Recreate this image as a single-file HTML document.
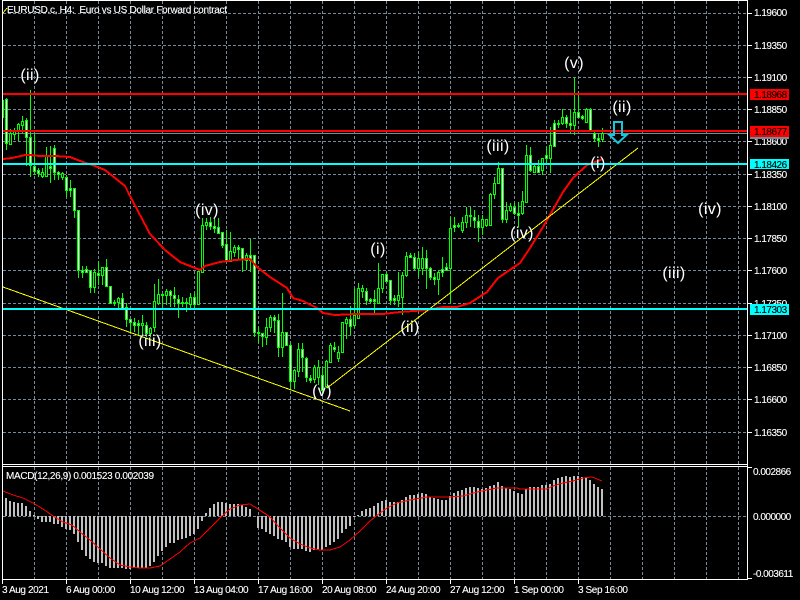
<!DOCTYPE html>
<html><head><meta charset="utf-8"><title>EURUSD.c H4</title>
<style>
html,body{margin:0;padding:0;background:#000;width:800px;height:600px;overflow:hidden}
svg{display:block;position:absolute;left:0;top:0}
text{font-family:"Liberation Sans",sans-serif;fill:#fff;font-size:10px;white-space:pre;stroke:#fff;stroke-width:.12px}
.p{font-size:10px;letter-spacing:-.5px}
.t{letter-spacing:-.4px}
.w{font-size:16px;text-anchor:middle;letter-spacing:.4px;stroke-width:0}
.k{fill:#000;stroke:#000}
</style></head><body>
<svg width="800" height="600" viewBox="0 0 800 600" xmlns="http://www.w3.org/2000/svg">
<!-- grid -->
<g shape-rendering="crispEdges" stroke="#778899" stroke-width="1" stroke-dasharray="3 2" fill="none">
<path d="M34.5 1V464M66.5 1V464M98.5 1V464M130.5 1V464M162.5 1V464M194.5 1V464M226.5 1V464M258.5 1V464M290.5 1V464M322.5 1V464M354.5 1V464M386.5 1V464M418.5 1V464M450.5 1V464M482.5 1V464M514.5 1V464M546.5 1V464M578.5 1V464M610.5 1V464M642.5 1V464M674.5 1V464M706.5 1V464M738.5 1V464"/>
<path d="M3 13.5H747M3 45.5H747M3 77.5H747M3 109.5H747M3 141.5H747M3 174.5H747M3 206.5H747M3 238.5H747M3 270.5H747M3 303.5H747M3 335.5H747M3 367.5H747M3 399.5H747M3 432.5H747"/>
<path d="M34.5 467V579M66.5 467V579M98.5 467V579M130.5 467V579M162.5 467V579M194.5 467V579M226.5 467V579M258.5 467V579M290.5 467V579M322.5 467V579M354.5 467V579M386.5 467V579M418.5 467V579M450.5 467V579M482.5 467V579M514.5 467V579M546.5 467V579M578.5 467V579M610.5 467V579M642.5 467V579M674.5 467V579M706.5 467V579M738.5 467V579"/>
<path d="M3 516.5H747"/>
</g>
<!-- bid line -->
<path d="M3 133.5H747" stroke="#778899" shape-rendering="crispEdges"/>
<!-- wicks -->
<path shape-rendering="crispEdges" stroke="#00ff00" fill="none" d="M3.5 100V118M6.5 98V150M10.5 129V145M14.5 128V140M18.5 123V141M22.5 116V133M26.5 118V166M30.5 90V177M34.5 133V175M38.5 168V177M42.5 168V178M46.5 147V177M50.5 146V183M54.5 145V180M58.5 171V180M62.5 172V180M66.5 175V197M70.5 180V197M74.5 188V218M78.5 210V278M82.5 266V278M86.5 266V273M90.5 270V293M94.5 269V293M98.5 261V285M102.5 267V285M106.5 259V287M110.5 286V304M114.5 300V306M118.5 297V308M122.5 293V308M126.5 303V327M130.5 319V332M134.5 318V332M138.5 320V335M142.5 315V335M146.5 322V337M150.5 327V337M154.5 284V332M158.5 279V305M162.5 294V307M166.5 289V305M170.5 290V307M174.5 287V307M178.5 295V318M182.5 297V307M186.5 298V312M190.5 293V308M194.5 293V309M198.5 271V305M202.5 218V272M206.5 218V230M210.5 217V230M214.5 218V233M218.5 218V233M222.5 232V248M226.5 230V261M230.5 232V261M234.5 245V257M238.5 245V260M242.5 248V272M246.5 253V270M250.5 239V272M254.5 255V337M258.5 327V343M262.5 333V347M266.5 318V345M270.5 315V332M274.5 315V333M278.5 314V357M282.5 293V357M286.5 332V346M290.5 343V390M294.5 369V389M298.5 343V377M302.5 343V372M306.5 357V382M310.5 375V383M314.5 365V383M318.5 360V385M322.5 367V395M326.5 360V388M330.5 343V363M334.5 342V352M338.5 346V362M342.5 322V353M346.5 317V339M350.5 306V335M354.5 288V328M358.5 283V318M362.5 285V298M366.5 288V305M370.5 298V303M374.5 290V313M378.5 263V303M382.5 274V293M386.5 272V282M390.5 280V305M394.5 295V305M398.5 272V307M402.5 272V315M406.5 252V277M410.5 253V258M414.5 253V270M418.5 252V277M422.5 247V275M426.5 250V289M430.5 267V280M434.5 273V285M438.5 270V295M442.5 257V277M446.5 263V270M450.5 217V303M454.5 217V232M458.5 223V228M462.5 217V233M466.5 207V228M470.5 207V227M474.5 210V228M478.5 215V242M482.5 215V235M486.5 219V227M490.5 193V225M494.5 177V199M498.5 162V183M502.5 168V223M506.5 202V223M510.5 203V212M514.5 203V215M518.5 202V227M522.5 191V215M526.5 145V202M530.5 147V172M534.5 163V173M538.5 160V172M542.5 158V175M546.5 147V163M550.5 127V173M554.5 120V147M558.5 120V128M562.5 109V125M566.5 115V128M570.5 110V133M574.5 78V135M578.5 95V118M582.5 115V120M586.5 108V122M590.5 108V130M594.5 130V142M598.5 133V147M602.5 128V142"/>
<!-- bodies -->
<path shape-rendering="crispEdges" stroke="#00ff00" stroke-width="3" fill="none" d="M6.5 99V144M10.5 133V145M14.5 131V135M18.5 124V131M22.5 121V126M26.5 120V138M30.5 137V166M34.5 166V172M38.5 170V174M42.5 172V177M46.5 156V177M50.5 166V169M54.5 148V173M58.5 172V175M62.5 173V178M66.5 177V191M70.5 188V191M74.5 188V211M78.5 210V271M82.5 270V273M86.5 269V273M90.5 270V288M94.5 272V288M98.5 273V276M102.5 267V276M106.5 267V287M110.5 286V304M114.5 302V304M118.5 298V303M122.5 298V309M126.5 307V320M130.5 319V323M134.5 322V326M138.5 323V326M142.5 323V326M146.5 325V334M150.5 328V334M154.5 301V328M158.5 294V304M162.5 294V296M166.5 291V296M170.5 291V296M174.5 295V299M178.5 299V304M182.5 302V304M186.5 302V304M190.5 297V305M194.5 297V305M198.5 271V305M202.5 225V273M206.5 222V226M210.5 222V227M214.5 226V229M218.5 227V234M222.5 232V246M226.5 244V262M230.5 251V262M234.5 247V253M238.5 247V250M242.5 248V260M246.5 255V261M250.5 255V261M254.5 255V333M258.5 332V334M262.5 333V337M266.5 327V338M270.5 317V328M274.5 317V321M278.5 320V348M282.5 332V348M286.5 332V346M290.5 345V382M294.5 370V382M298.5 349V372M302.5 349V358M306.5 358V378M310.5 378V381M314.5 367V380M318.5 367V378M322.5 375V391M326.5 361V387M330.5 345V363M334.5 347V350M338.5 352V359M342.5 322V353M346.5 319V324M350.5 319V327M354.5 315V326M358.5 288V319M362.5 288V292M366.5 291V301M370.5 299V302M374.5 299V302M378.5 288V304M382.5 274V289M386.5 274V282M390.5 280V301M394.5 298V301M398.5 295V301M402.5 275V298M406.5 256V276M410.5 255V258M414.5 257V269M418.5 258V269M422.5 258V269M426.5 258V269M430.5 268V278M434.5 277V280M438.5 272V280M442.5 269V273M446.5 267V271M450.5 228V269M454.5 225V228M458.5 225V227M462.5 222V231M466.5 215V223M470.5 215V217M474.5 217V221M478.5 221V228M482.5 219V228M486.5 219V226M490.5 194V226M494.5 183V195M498.5 168V184M502.5 168V220M506.5 210V220M510.5 206V211M514.5 207V214M518.5 213V216M522.5 201V214M526.5 155V203M530.5 155V171M534.5 166V173M538.5 166V173M542.5 158V171M546.5 155V159M550.5 145V159M554.5 123V147M558.5 123V125M562.5 117V124M566.5 117V124M570.5 123V126M574.5 112V126M578.5 112V118M582.5 116V119M586.5 109V123M590.5 109V131M594.5 133V139M598.5 138V141M602.5 133V140"/>
<!-- white fill -->
<path shape-rendering="crispEdges" stroke="#fff" fill="none" d="M6.5 100V143M26.5 121V137M30.5 138V165M34.5 167V171M38.5 171V173M50.5 167V168M54.5 149V172M58.5 173V174M66.5 178V190M70.5 189V190M74.5 189V210M78.5 211V270M82.5 271V272M86.5 270V272M90.5 271V287M98.5 274V275M106.5 268V286M110.5 287V303M122.5 299V308M126.5 308V319M130.5 320V322M134.5 323V325M138.5 324V325M146.5 326V333M162.5 295V295M170.5 292V295M174.5 296V298M178.5 300V303M194.5 298V304M210.5 223V226M214.5 227V228M218.5 228V233M222.5 233V245M226.5 245V261M238.5 248V249M242.5 249V259M250.5 256V260M254.5 256V332M262.5 334V336M274.5 318V320M278.5 321V347M286.5 333V345M290.5 346V381M302.5 350V357M306.5 359V377M310.5 379V380M322.5 376V390M334.5 348V349M350.5 320V326M366.5 292V300M370.5 300V301M374.5 300V301M386.5 275V281M390.5 281V300M394.5 299V300M410.5 256V257M414.5 258V268M426.5 259V268M430.5 269V277M434.5 278V279M442.5 270V272M446.5 268V270M454.5 226V227M474.5 218V220M478.5 222V227M502.5 169V219M514.5 208V213M518.5 214V215M530.5 156V170M538.5 167V172M546.5 156V158M554.5 124V146M566.5 118V123M570.5 124V125M578.5 113V117M582.5 117V118M590.5 110V130M594.5 134V138M598.5 139V140"/>
<!-- black fill -->
<path shape-rendering="crispEdges" stroke="#000" fill="none" d="M10.5 134V144M14.5 132V134M18.5 125V130M22.5 122V125M42.5 173V176M46.5 157V176M62.5 174V177M94.5 273V287M102.5 268V275M118.5 299V302M142.5 324V325M150.5 329V333M154.5 302V327M158.5 295V303M166.5 292V295M190.5 298V304M198.5 272V304M202.5 226V272M206.5 223V225M230.5 252V261M234.5 248V252M246.5 256V260M266.5 328V337M270.5 318V327M282.5 333V347M294.5 371V381M298.5 350V371M314.5 368V379M318.5 368V377M326.5 362V386M330.5 346V362M338.5 353V358M342.5 323V352M346.5 320V323M354.5 316V325M358.5 289V318M362.5 289V291M378.5 289V303M382.5 275V288M398.5 296V300M402.5 276V297M406.5 257V275M418.5 259V268M422.5 259V268M438.5 273V279M450.5 229V268M462.5 223V230M466.5 216V222M482.5 220V227M486.5 220V225M490.5 195V225M494.5 184V194M498.5 169V183M506.5 211V219M510.5 207V210M522.5 202V213M526.5 156V202M534.5 167V172M542.5 159V170M550.5 146V158M562.5 118V123M574.5 113V125M586.5 110V122M602.5 134V139"/>
<!-- moving average -->
<polyline shape-rendering="crispEdges" fill="none" stroke="#ff0000" stroke-width="2" stroke-linejoin="round" points="3,159 12,158 25,155 30,155 40,156 55,156 70,157 80,161 95,166 105,170 115,178 125,186 130,196 150,234 165,250 180,262 195,268 200,270 205,266 220,262 235,260 250,259 257,267 270,277 287,288 293,298 303,301 317,308 323,313 335,315 357,314 383,314 400,312 427,310 443,307 457,307 470,303 487,292 498,278 520,263 530,248 543,227 563,192 573,178 587,165 603,159"/>
<!-- trend lines -->
<path shape-rendering="crispEdges" d="M3 287L350 411M327 388L638 148" stroke="#ffff00" stroke-width="1" fill="none"/>
<!-- horizontal levels -->
<g shape-rendering="crispEdges">
<rect x="3" y="93" width="744" height="2" fill="#ff0000"/>
<rect x="3" y="130" width="744" height="2" fill="#ff0000"/>
<rect x="3" y="163" width="744" height="2" fill="#00ffff"/>
<rect x="3" y="308" width="744" height="2" fill="#00ffff"/>
</g>
<!-- arrow -->
<path d="M614 122H622V135H626.5L618 143L609.5 135H614Z" fill="none" stroke="#12c8dd" stroke-width="2"/>
<!-- wave labels -->
<g class="wv">
<text class="w" x="30" y="80">(ii)</text>
<text class="w" x="574" y="68">(v)</text>
<text class="w" x="622" y="112">(ii)</text>
<text class="w" x="598" y="168">(i)</text>
<text class="w" x="498" y="151">(iii)</text>
<text class="w" x="207" y="215">(iv)</text>
<text class="w" x="150" y="346">(iii)</text>
<text class="w" x="322" y="396">(v)</text>
<text class="w" x="378" y="254">(i)</text>
<text class="w" x="410" y="332">(ii)</text>
<text class="w" x="522" y="238">(iv)</text>
<text class="w" x="710" y="214">(iv)</text>
<text class="w" x="674" y="278">(iii)</text>
</g>
<!-- MACD histogram -->
<path shape-rendering="crispEdges" stroke="#c0c0c0" stroke-width="2" fill="none" d="M6 516V498M10 516V501M14 516V502M18 516V503M22 516V503M26 516V506M30 516V511M34 516V515M38 516V519M42 516V522M46 516V522M50 516V522M54 516V524M58 516V524M62 516V527M66 516V529M70 516V530M74 516V534M78 516V542M82 516V550M86 516V556M90 516V559M94 516V562M98 516V563M102 516V563M106 516V566M110 516V568M114 516V568M118 516V568M122 516V568M126 516V569M130 516V569M134 516V568M138 516V568M142 516V568M146 516V568M150 516V566M154 516V562M158 516V556M162 516V551M166 516V547M170 516V543M174 516V543M178 516V540M182 516V539M186 516V538M190 516V536M194 516V534M198 516V529M202 516V521M206 516V513M210 516V508M214 516V504M218 516V502M222 516V502M226 516V503M230 516V504M234 516V504M238 516V504M242 516V505M246 516V507M250 516V509M258 516V528M262 516V529M266 516V532M270 516V534M274 516V536M278 516V539M282 516V540M286 516V542M290 516V547M294 516V549M298 516V549M302 516V549M306 516V551M310 516V552M314 516V550M318 516V549M322 516V550M326 516V547M330 516V545M334 516V542M338 516V539M342 516V533M346 516V529M350 516V526M354 516V517M358 516V515M362 516V511M366 516V509M370 516V508M374 516V506M378 516V503M382 516V501M386 516V500M390 516V502M394 516V502M398 516V502M402 516V500M406 516V497M410 516V495M414 516V495M418 516V494M422 516V493M426 516V494M430 516V497M434 516V498M438 516V499M442 516V500M446 516V500M450 516V496M454 516V493M458 516V491M462 516V490M466 516V488M470 516V487M474 516V487M478 516V488M482 516V489M486 516V488M490 516V486M494 516V485M498 516V482M502 516V486M506 516V488M510 516V489M514 516V491M518 516V493M522 516V494M526 516V489M530 516V487M534 516V487M538 516V487M542 516V485M546 516V485M550 516V484M554 516V480M558 516V478M562 516V477M566 516V476M570 516V477M574 516V476M578 516V476M582 516V477M586 516V477M590 516V480M594 516V484M598 516V487M602 516V489"/>
<!-- MACD signal -->
<polyline shape-rendering="crispEdges" fill="none" stroke="#ff0000" stroke-width="1" points="3,491 13,495 23,498 33,503 43,509 53,516 63,522 72,525 80,532 90,540 100,549 110,558 120,565 130,567 140,568 150,568 160,566 170,559 180,552 190,543 200,538 210,528 220,518 230,509 240,505 250,504 258,509 270,517 280,528 290,538 300,544 310,548 320,550 330,550 340,547 350,540 360,531 370,521 380,513 387,508 397,503 410,500 427,497 450,497 463,496 477,492 497,488 517,488 520,489 540,489 547,489 553,486 563,483 573,481 583,478 592,477 597,479 602,481"/>
<!-- frame -->
<g shape-rendering="crispEdges" fill="#fff">
<rect x="2" y="0" width="746" height="1"/>
<rect x="2" y="0" width="1" height="580"/>
<rect x="747" y="0" width="1" height="580"/>
<rect x="2" y="464" width="746" height="1"/>
<rect x="2" y="466" width="746" height="1"/>
<rect x="2" y="579" width="746" height="1"/>
<!-- price ticks -->
<path d="M748 13h4v1h-4zM748 45h4v1h-4zM748 77h4v1h-4zM748 109h4v1h-4zM748 141h4v1h-4zM748 174h4v1h-4zM748 206h4v1h-4zM748 238h4v1h-4zM748 270h4v1h-4zM748 303h4v1h-4zM748 335h4v1h-4zM748 367h4v1h-4zM748 399h4v1h-4zM748 432h4v1h-4zM748 467h4v1h-4zM748 578h4v1h-4z"/>
<!-- time ticks -->
<path d="M2 580h1v4h-1zM66 580h1v4h-1zM130 580h1v4h-1zM194 580h1v4h-1zM258 580h1v4h-1zM322 580h1v4h-1zM386 580h1v4h-1zM450 580h1v4h-1zM514 580h1v4h-1zM578 580h1v4h-1z"/>
</g>
<!-- price labels -->
<g class="pl">
<text class="p" x="754" y="16">1.19600</text>
<text class="p" x="754" y="49">1.19350</text>
<text class="p" x="754" y="81">1.19100</text>
<text class="p" x="754" y="113">1.18850</text>
<text class="p" x="754" y="145">1.18600</text>
<text class="p" x="754" y="178">1.18350</text>
<text class="p" x="754" y="210">1.18100</text>
<text class="p" x="754" y="242">1.17850</text>
<text class="p" x="754" y="274">1.17600</text>
<text class="p" x="754" y="307">1.17350</text>
<text class="p" x="754" y="339">1.17100</text>
<text class="p" x="754" y="371">1.16850</text>
<text class="p" x="754" y="403">1.16600</text>
<text class="p" x="754" y="436">1.16350</text>
<text class="p" x="753" y="475">0.002866</text>
<text class="p" x="753" y="520">0.000000</text>
<text class="p" x="753" y="577">-0.003611</text>
</g>
<!-- price tags -->
<g shape-rendering="crispEdges">
<rect x="750" y="89" width="39" height="11" fill="#ff0000"/>
<rect x="750" y="126" width="39" height="11" fill="#ff0000"/>
<rect x="750" y="137" width="39" height="2" fill="#778899"/>
<rect x="750" y="159" width="39" height="10" fill="#00ffff"/>
<rect x="750" y="304" width="39" height="11" fill="#00ffff"/>
</g>
<text class="p k" x="754" y="98">1.18968</text>
<text class="p k" x="754" y="135">1.18677</text>
<text class="p k" x="754" y="168">1.18426</text>
<text class="p k" x="754" y="313">1.17303</text>
<!-- titles -->
<path shape-rendering="crispEdges" d="M3 13L7 8" stroke="#ffff00" fill="none"/>
<text x="7" y="13" textLength="220" lengthAdjust="spacing">EURUSD.c, H4:  Euro vs US Dollar Forward contract</text>
<text x="6" y="479" textLength="148" lengthAdjust="spacing">MACD(12,26,9) 0.001523 0.002039</text>
<!-- time labels -->
<text class="t" x="2" y="593">3 Aug 2021</text>
<text class="t" x="66" y="593">6 Aug 00:00</text>
<text class="t" x="130" y="593">10 Aug 12:00</text>
<text class="t" x="194" y="593">13 Aug 04:00</text>
<text class="t" x="258" y="593">17 Aug 16:00</text>
<text class="t" x="322" y="593">20 Aug 08:00</text>
<text class="t" x="386" y="593">24 Aug 20:00</text>
<text class="t" x="450" y="593">27 Aug 12:00</text>
<text class="t" x="514" y="593">1 Sep 00:00</text>
<text class="t" x="578" y="593">3 Sep 16:00</text>
</svg>
</body></html>
